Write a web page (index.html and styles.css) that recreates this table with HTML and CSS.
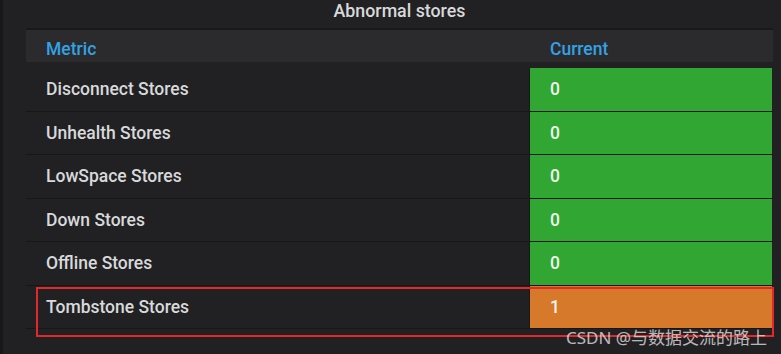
FILE: index.html
```html
<!DOCTYPE html>
<html lang="en">
<head>
<meta charset="utf-8">
<link rel="stylesheet" href="styles.css">
</head>
<body>
<div class="panel">
  <div class="title">Abnormal stores</div>
  <div class="table">
    <div class="thead">
      <div class="th metric">Metric</div>
      <div class="th current">Current</div>
    </div>
    <div class="tbody">
      <div class="row"><div class="name">Disconnect Stores</div><div class="val ok">0</div></div>
      <div class="row"><div class="name">Unhealth Stores</div><div class="val ok">0</div></div>
      <div class="row"><div class="name">LowSpace Stores</div><div class="val ok">0</div></div>
      <div class="row"><div class="name">Down Stores</div><div class="val ok">0</div></div>
      <div class="row"><div class="name">Offline Stores</div><div class="val ok">0</div></div>
      <div class="row"><div class="name">Tombstone Stores</div><div class="val warn">1</div></div>
    </div>
  </div>
  <div class="highlight"></div>
  <div class="watermark">CSDN @与数据交流的路上</div>
</div>
</body>
</html>
```

FILE: styles.css
```css
html, body {
  margin: 0;
  padding: 0;
  background: #212124;
}
body {
  width: 781px;
  height: 354px;
  overflow: hidden;
  font-family: Roboto, "Noto Sans CJK SC", sans-serif;
}
.panel {
  position: relative;
  height: 354px;
  box-sizing: border-box;
  border-left: 3px solid #18181a;
  padding: 0 8px 0 23px;
}
.title {
  height: 28px;
  line-height: 21px;
  text-align: center;
  color: #d8d9da;
  font-size: 17.8px;
  font-weight: 500;
}
.thead {
  display: grid;
  grid-template-columns: 504px 1fr;
  height: 32px;
  border-top: 2px solid #19191b;
  background: #2b2b2e;
}
.th {
  color: #33a2e5;
  font-size: 17.5px;
  font-weight: 500;
  padding-left: 20px;
  line-height: 39px;
  height: 32px;
}
.tbody {
  padding-top: 6px;
}
.row {
  display: grid;
  grid-template-columns: 503px 1px 1fr;
  height: 42.5px;
  border-bottom: 1px solid #171719;
}
.row::before {
  content: "";
  grid-column: 2;
  grid-row: 1;
  background: #18181a;
}
.name {
  grid-column: 1;
  grid-row: 1;
  color: #d8d9da;
  font-size: 17.5px;
  font-weight: 500;
  padding-left: 20px;
  line-height: 42px;
}
.val {
  grid-column: 3;
  grid-row: 1;
  margin-right: 1px;
  color: #eef3ee;
  font-size: 17.5px;
  font-weight: 500;
  padding-left: 20px;
  line-height: 42px;
}
.ok {
  background: #31a632;
}
.warn {
  background: #d6792a;
}
.highlight {
  position: absolute;
  left: 33px;
  top: 287px;
  width: 738px;
  height: 50px;
  box-sizing: border-box;
  border: 2px solid #e2282b;
}
.watermark {
  position: absolute;
  left: 563px;
  top: 324px;
  color: rgba(225, 225, 225, 0.8);
  font-size: 17px;
  font-family: "Noto Sans", "Noto Sans CJK SC", sans-serif;
  white-space: nowrap;
}
```
